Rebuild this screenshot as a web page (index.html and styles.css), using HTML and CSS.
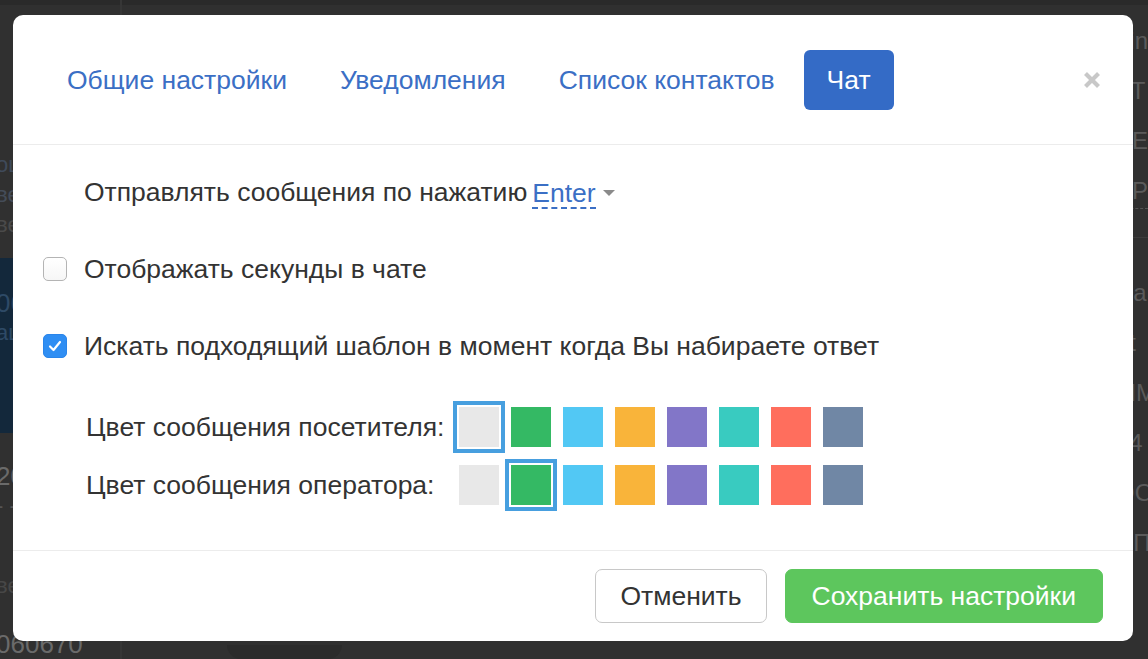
FILE: index.html
```html
<!DOCTYPE html>
<html lang="ru">
<head>
<meta charset="utf-8">
<title>Настройки</title>
<link rel="stylesheet" href="styles.css">
</head>
<body>
<div class="page">
  <aside class="side-left">
    <div class="sl-top"></div>
    <div class="sl-text sl-a">ош</div>
    <div class="sl-text sl-b">вес</div>
    <div class="sl-text sl-c">вен</div>
    <div class="sl-navy">
      <div class="sl-navy-t1">06</div>
      <div class="sl-navy-t2">аш</div>
    </div>
    <div class="sl-text sl-d">20</div>
    <div class="sl-text sl-e">- -</div>
    <div class="sl-text sl-f">вет</div>
    <div class="sl-text sl-g">060670</div>
  </aside>
  <main class="page-main">
    <div class="pm-pill"></div>
  </main>
  <aside class="side-right">
    <div class="sr-line">Lin</div>
    <div class="sr-line">ТТ</div>
    <div class="sr-line">ЕЕ</div>
    <div class="sr-line sr-dash">РР</div>
    <div class="sr-sep"></div>
    <div class="sr-line">На</div>
    <div class="sr-line">ht</div>
    <div class="sr-line">ММ</div>
    <div class="sr-line">44</div>
    <div class="sr-line">ОО</div>
    <div class="sr-line">ПП</div>
  </aside>
</div>

<div class="backdrop">
  <div class="modal">
    <header class="modal-head">
      <nav class="tabs">
        <a class="tab">Общие настройки</a>
        <a class="tab">Уведомления</a>
        <a class="tab">Список контактов</a>
        <a class="tab tab-active">Чат</a>
      </nav>
      <button class="close" aria-label="Закрыть">
        <svg width="18" height="18" viewBox="0 0 18 18"><path d="M2.5 2.5 L15.5 15.5 M15.5 2.5 L2.5 15.5" stroke="#c8c8c8" stroke-width="4.2" stroke-linecap="butt"/></svg>
      </button>
    </header>
    <section class="modal-body">
      <div class="row row-plain">
        <span>Отправлять сообщения по нажатию</span>
        <span class="dropdown"><span class="dd-value">Enter</span><span class="caret"></span></span>
      </div>
      <label class="row row-check">
        <span class="cb"></span>
        <span>Отображать секунды в чате</span>
      </label>
      <label class="row row-check">
        <span class="cb cb-on">
          <svg width="14" height="12" viewBox="0 0 14 12"><path d="M2 6.5 L5.5 10 L12 2" fill="none" stroke="#fff" stroke-width="2.2" stroke-linecap="round" stroke-linejoin="round"/></svg>
        </span>
        <span>Искать подходящий шаблон в момент когда Вы набираете ответ</span>
      </label>
      <div class="colors">
        <div class="color-row">
          <span class="color-label">Цвет сообщения посетителя:</span>
          <div class="swatches">
            <span class="sw sw-gray sw-sel"></span>
            <span class="sw sw-green"></span>
            <span class="sw sw-sky"></span>
            <span class="sw sw-orange"></span>
            <span class="sw sw-purple"></span>
            <span class="sw sw-teal"></span>
            <span class="sw sw-red"></span>
            <span class="sw sw-slate"></span>
          </div>
        </div>
        <div class="color-row">
          <span class="color-label">Цвет сообщения оператора:</span>
          <div class="swatches">
            <span class="sw sw-gray"></span>
            <span class="sw sw-green sw-sel"></span>
            <span class="sw sw-sky"></span>
            <span class="sw sw-orange"></span>
            <span class="sw sw-purple"></span>
            <span class="sw sw-teal"></span>
            <span class="sw sw-red"></span>
            <span class="sw sw-slate"></span>
          </div>
        </div>
      </div>
    </section>
    <footer class="modal-foot">
      <button class="btn btn-cancel">Отменить</button>
      <button class="btn btn-save">Сохранить настройки</button>
    </footer>
  </div>
</div>
</body>
</html>
```

FILE: styles.css
```css
html, body {
  margin: 0;
  padding: 0;
}
body {
  width: 1148px;
  height: 659px;
  overflow: hidden;
  background: #2e2e2e;
  font-family: "Helvetica Neue", "Liberation Sans", Arial, sans-serif;
  position: relative;
}

/* dimmed page behind */
.page {
  display: flex;
  height: 659px;
  background: linear-gradient(#2a2a2a 0 5px, #303030 5px);
}
.side-left {
  width: 120px;
  border-right: 2px solid #363636;
  display: flex;
  flex-direction: column;
  color: #5c5c5c;
  font-size: 22px;
}
.sl-top { height: 150px; }
.sl-text { line-height: 30px; white-space: nowrap; margin-left: -4px; }
.sl-a { color: #3f4a5a; }
.sl-b { color: #444c58; }
.sl-c { color: #4a4a4a; margin-bottom: 18px; }
.sl-navy {
  height: 175px;
  background: #13283b;
  color: #2e4a66;
  padding-top: 30px;
  box-sizing: border-box;
}
.sl-navy-t1 { line-height: 30px; margin-left: -4px; font-size: 26px; }
.sl-navy-t2 { line-height: 30px; margin-left: -4px; }
.sl-d { margin-top: 28px; color: #6a6a6a; font-size: 26px; }
.sl-e { color: #555; }
.sl-f { margin-top: 50px; color: #474747; }
.sl-g { margin-top: 28px; color: #6a6a6a; font-size: 26px; }
.page-main {
  flex: 1;
  position: relative;
}
.pm-pill {
  position: absolute;
  left: 105px;
  bottom: 0;
  width: 115px;
  height: 14px;
  background: #2b2b2b;
  border-radius: 0 0 16px 16px;
}
.side-right {
  width: 30px;
  padding-top: 26px;
  color: #5a5a5a;
  font-size: 24px;
  overflow: hidden;
  white-space: nowrap;
}
.sr-line { line-height: 30px; height: 30px; margin-bottom: 20px; margin-left: -2px; }
.sr-dash { border-bottom: 1px dashed #555; margin-bottom: 16px; height: 32px; }
.sr-sep { height: 1px; background: #3c3c3c; margin: 28px 0 40px 0; }

/* modal */
.backdrop {
  position: absolute;
  inset: 0;
  padding: 15px 15px 18px 13px;
  box-sizing: border-box;
  display: flex;
}
.modal {
  flex: 1;
  background: #fff;
  border-radius: 10px;
  display: flex;
  flex-direction: column;
  overflow: hidden;
}
.modal-head {
  display: flex;
  align-items: center;
  padding: 35px 30px 34px;
  border-bottom: 1px solid #ececec;
}
.tabs {
  display: flex;
  gap: 5px;
}
.tab {
  display: block;
  height: 60px;
  line-height: 60px;
  padding: 0 24px;
  font-size: 26.5px;
  color: #3b6fc5;
  border-radius: 6px;
  cursor: pointer;
}
.tab-active {
  background: #346bc6;
  color: #fff;
  padding: 0 23px;
}
.close {
  margin-left: auto;
  margin-right: 2px;
  border: 0;
  background: none;
  padding: 0;
  width: 18px;
  height: 18px;
  display: flex;
}

.modal-body {
  flex: 1;
  padding: 32px 30px 0;
  color: #333;
  font-size: 26.5px;
}
.row {
  display: flex;
  align-items: center;
  height: 30px;
  line-height: 30px;
  margin-bottom: 47px;
  white-space: nowrap;
}
.row-plain {
  padding-left: 41px;
}
.dropdown {
  display: inline-flex;
  align-items: center;
  margin-left: 5px;
}
.dd-value {
  color: #3b6fc5;
  line-height: 28px;
  border-bottom: 2px dashed #3b6fc5;
  margin-top: 4px;
}
.caret {
  width: 0;
  height: 0;
  border-left: 6px solid transparent;
  border-right: 6px solid transparent;
  border-top: 6px solid #8a8a8a;
  margin-left: 7px;
  margin-top: 2px;
}
.row-check {
  gap: 17px;
}
.cb {
  width: 24px;
  height: 24px;
  flex: none;
  box-sizing: border-box;
  border: 1px solid #b4b4b4;
  border-radius: 5px;
  background: linear-gradient(#fff, #f6f6f6);
  display: flex;
  align-items: center;
  justify-content: center;
}
.cb-on {
  background: #2f8ef3;
  border-color: #2a85ea;
}
.colors {
  display: flex;
  flex-direction: column;
  gap: 18px;
  margin-top: -1px;
}
.color-row {
  display: flex;
  align-items: center;
  height: 40px;
}
.color-label {
  width: 416px;
  padding-left: 43px;
  box-sizing: border-box;
  flex: none;
  white-space: nowrap;
}
.swatches {
  display: flex;
  gap: 12px;
}
.sw {
  width: 40px;
  height: 40px;
  display: block;
}
.sw-sel {
  box-shadow: 0 0 0 2px #fff, 0 0 0 6px #479fdf;
}
.sw-gray { background: #e8e8e8; }
.sw-green { background: #34b964; }
.sw-sky { background: #52c8f4; }
.sw-orange { background: #f9b43a; }
.sw-purple { background: #8276c8; }
.sw-teal { background: #39cbc0; }
.sw-red { background: #ff6e5d; }
.sw-slate { background: #7087a5; }

.modal-foot {
  display: flex;
  justify-content: flex-end;
  gap: 18px;
  padding: 18px 30px 18px;
  border-top: 1px solid #ececec;
}
.btn {
  height: 54px;
  border-radius: 7px;
  font-family: inherit;
  font-size: 26.5px;
  padding: 0 26px;
  cursor: pointer;
}
.btn-cancel {
  background: #fff;
  border: 1px solid #c8c8c8;
  color: #333;
  padding: 0 24px;
}
.btn-save {
  background: #5dc65d;
  border: 1px solid #5dc65d;
  color: #fff;
}
```
